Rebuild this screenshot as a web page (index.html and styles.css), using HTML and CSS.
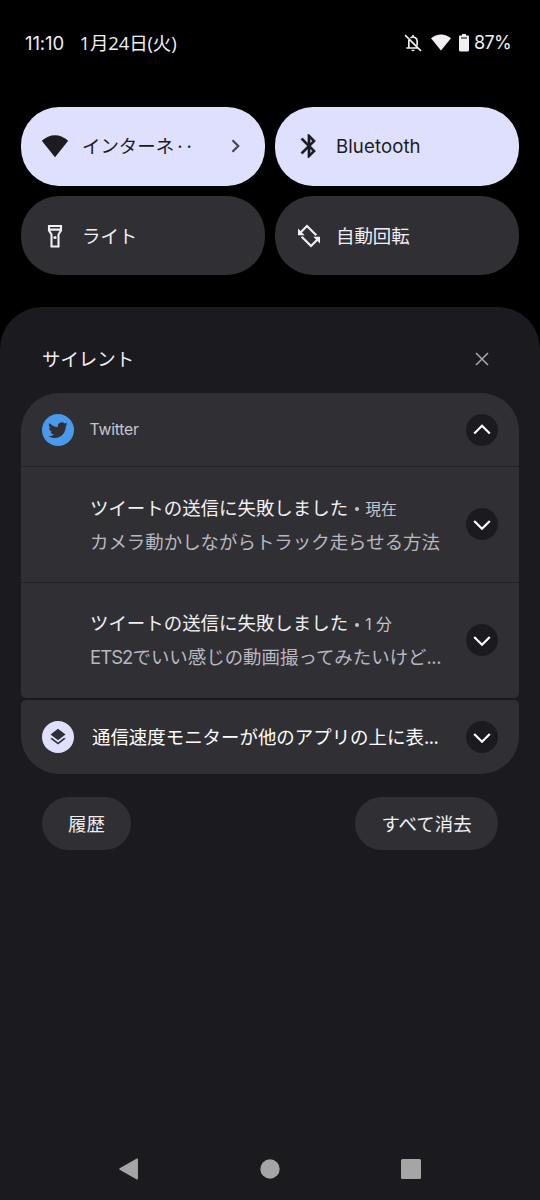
FILE: index.html
```html
<!DOCTYPE html>
<html lang="ja">
<head>
<meta charset="utf-8">
<title>通知</title>
<link rel="stylesheet" href="styles.css">
</head>
<body>
<div class="screen">
  <header class="status">
    <span class="clock">11:10</span>
    <span class="date">1月24日(火)</span>
    <div class="status-icons">
      <svg class="bell" viewBox="0 0 24 24" fill="none" stroke="currentColor" stroke-width="2"><path d="M2.500 2.500 21.500 21.500M7 8.500V18M4 18h14M9 5.900A5 5 0 0 1 17 10v5M12 2.500v2"/><path d="M10 20h4a2 2 0 0 1-4 0z" fill="currentColor" stroke="none"/></svg>
      <svg class="wifi-small" viewBox="0 0 20 17"><path d="M10 16.500 0 4.200C5.500-.9 14.500-.9 20 4.200z" fill="currentColor"/></svg>
      <svg class="battery" viewBox="0 0 10 18"><path fill="currentColor" fill-rule="evenodd" d="M3 0h4v1.500h2a1 1 0 0 1 1 1V16a1.500 1.500 0 0 1-1.500 1.500h-7A1.500 1.500 0 0 1 0 16V2.500a1 1 0 0 1 1-1h2zM2 3.400v1.200h6V3.400z"/></svg>
      <span class="percent">87%</span>
    </div>
  </header>

  <section class="tiles">
    <div class="tile on">
      <svg class="tile-icon" viewBox="0 0 28 28"><path d="M14 25.300.800 8.800C8.400 1.300 19.600 1.300 27.200 8.800z" fill="currentColor"/></svg>
      <span class="label">インターネ<span class="dots">··</span></span>
      <svg class="next" viewBox="0 0 10 14" fill="none" stroke="currentColor" stroke-width="2.200"><path d="m1.500 1.200 5.800 5.800-5.800 5.800"/></svg>
    </div>
    <div class="tile on">
      <svg class="tile-icon" viewBox="0 0 24 24"><path fill="currentColor" stroke="currentColor" stroke-width=".3" d="M17.710 7.710 12 2h-1v7.590L6.410 5 5 6.410 10.590 12 5 17.590 6.410 19 11 14.410V22h1l5.710-5.710L13.410 12zM13 5.830l1.880 1.880L13 9.590zm1.880 10.460L13 18.170v-3.760z"/></svg>
      <span class="label latin">Bluetooth</span>
    </div>
    <div class="tile">
      <svg class="tile-icon" viewBox="0 0 28 28" fill="none" stroke="currentColor" stroke-width="2.100"><path d="M8 4h12v4.500l-2.500 4V24.500h-7V12.500L8 8.500zM8 7.600h12"/><circle cx="14" cy="15.500" r="1.600" fill="currentColor" stroke="none"/></svg>
      <span class="label">ライト</span>
    </div>
    <div class="tile">
      <svg class="tile-icon" viewBox="0 0 28 28" fill="none" stroke="currentColor" stroke-width="2.200"><path d="M21.300 13.200 12 4 5 11M6.700 14.800l9.300 9.200 7-7"/><path d="M3 6.500v6.700h6.700zM25 21.500v-6.700h-6.700z" fill="currentColor" stroke="none"/></svg>
      <span class="label">自動回転</span>
    </div>
  </section>

  <main class="shade">
    <div class="section-head">
      <span>サイレント</span>
      <svg class="close" viewBox="0 0 14 14" fill="none" stroke="currentColor" stroke-width="1.500"><path d="m1 1 12 12M13 1 1 13"/></svg>
    </div>

    <article class="card group">
      <div class="group-head">
        <span class="app-icon twitter"><svg viewBox="0 0 24 24"><path fill="currentColor" d="M23.640 4.940c-.860.380-1.780.640-2.750.750a4.800 4.800 0 0 0 2.100-2.640 9.600 9.600 0 0 1-3.030 1.160 4.780 4.780 0 0 0-8.150 4.360A13.560 13.560 0 0 1 1.960 3.570a4.780 4.780 0 0 0 1.480 6.380 4.760 4.760 0 0 1-2.160-.600v.060a4.780 4.780 0 0 0 3.830 4.690 4.790 4.790 0 0 1-2.160.080 4.780 4.780 0 0 0 4.460 3.320A9.580 9.580 0 0 1 .340 19.480a13.520 13.520 0 0 0 7.320 2.150c8.800 0 13.600-7.290 13.600-13.600l-.020-.620a9.700 9.700 0 0 0 2.400-2.470z"/></svg></span>
        <span class="app-name">Twitter</span>
        <span class="expand"><svg viewBox="0 0 20 20"><path d="m2.200 13.500 7.800-7.800 7.800 7.800"/></svg></span>
      </div>
      <div class="message">
        <div class="copy">
          <div class="title">ツイートの送信に失敗しました<span class="time"><i class="dot"></i>現在</span></div>
          <div class="body">カメラ動かしながらトラック走らせる方法</div>
        </div>
        <span class="expand"><svg viewBox="0 0 20 20"><path d="m2.200 7 7.800 7.800L17.800 7"/></svg></span>
      </div>
      <div class="message">
        <div class="copy">
          <div class="title">ツイートの送信に失敗しました<span class="time"><i class="dot"></i>1 分</span></div>
          <div class="body"><span class="ets">ETS2</span>でいい感じの動画撮ってみたいけど<span class="ell">...</span></div>
        </div>
        <span class="expand"><svg viewBox="0 0 20 20"><path d="m2.200 7 7.800 7.800L17.800 7"/></svg></span>
      </div>
    </article>

    <article class="card single">
      <span class="app-icon layers"><svg viewBox="0 0 24 24"><path fill="currentColor" d="m11.990 18.540-7.370-5.730L3 14.070l9 7 9-7-1.630-1.270zM12 16l7.360-5.730L21 9l-9-7-9 7 1.630 1.270z"/></svg></span>
      <span class="single-title">通信速度モニターが他のアプリの上に表<span class="ell">...</span></span>
      <span class="expand"><svg viewBox="0 0 20 20"><path d="m2.200 7 7.800 7.800L17.800 7"/></svg></span>
    </article>

    <div class="actions">
      <button class="pill history">履歴</button>
      <button class="pill clear">すべて消去</button>
    </div>

    <nav class="nav">
      <svg viewBox="0 0 22 22"><path d="M2 11 19.200 1.200v19.600z" fill="currentColor" stroke="currentColor" stroke-width="1.500" stroke-linejoin="round"/></svg>
      <svg viewBox="0 0 22 22"><circle cx="11" cy="11" r="9.700" fill="currentColor"/></svg>
      <svg viewBox="0 0 22 22"><rect x="1" y="1" width="20" height="20" rx="1.500" fill="currentColor"/></svg>
    </nav>
  </main>
</div>
</body>
</html>
```
FILE: styles.css
```css
* { box-sizing: border-box; }
body {
  margin: 0;
  background: #000;
  color: #f1eff4;
  font-family: Inter, "Noto Sans CJK JP", sans-serif;
  font-size: 18.450px;
  line-height: 28px;
  white-space: nowrap;
}
svg { display: block; flex: none; }
.screen { width: 540px; height: 1200px; display: flex; flex-direction: column; overflow: hidden; }

.status { height: 106.500px; flex: none; padding: 28.500px 30px 0 25px; display: flex; align-items: flex-start; }
.clock { width: 54.500px; font-size: 18.500px; letter-spacing: -.1px; }
.date { font-size: 18.500px; letter-spacing: -.15px; font-family: "Open Sans", "Noto Sans CJK JP", sans-serif; }
.status-icons { margin-left: auto; display: flex; align-items: center; height: 28px; }
.bell { width: 20px; height: 20px; }
.wifi-small { width: 20px; height: 17px; margin-left: 8px; }
.battery { width: 10px; height: 18px; margin: 0 5px 0 8px; }
.percent { width: 36px; font-size: 18px; letter-spacing: -.7px; }

.tiles { flex: none; display: grid; grid-template-columns: 243.500px 243.500px; gap: 10.500px; padding: 0 21px; margin-bottom: 31.500px; }
.tile { height: 79px; border-radius: 38px; background: #303034; display: flex; align-items: center; padding: 0 24px 0 20px; }
.tile.on { background: #dfe0fe; color: #1b1b20; }
.tile-icon { width: 28px; height: 28px; margin-right: 13px; }
.label.latin { font-size: 18.600px; letter-spacing: .1px; }
.dots { letter-spacing: 4px; margin-left: 3px; }
.next { width: 10px; height: 14px; margin-left: auto; color: #45464f; }

.shade { flex: 1; background: #1b1b1f; border-radius: 42px 42px 0 0; padding: 0 21px; display: flex; flex-direction: column; }
.section-head { height: 86.500px; padding: 18px 30px 0 21px; display: flex; align-items: center; justify-content: space-between; }
.close { width: 14px; height: 14px; color: #a9a8b0; }

.card { background: #303034; width: 498px; }
.group { height: 304.500px; border-radius: 38px 38px 5px 5px; }
.group-head { height: 73px; display: flex; align-items: center; padding: 0 21px; }
.app-icon { width: 32px; height: 32px; border-radius: 50%; display: grid; place-items: center; flex: none; }
.twitter { background: #4a9aec; color: #303034; }
.twitter svg { width: 20px; height: 20px; }
.layers { background: #dfe0fe; color: #303034; }
.layers svg { width: 20px; height: 20px; }
.app-name { margin-left: 15.500px; color: #c6c4cc; font-size: 15.800px; letter-spacing: -.25px; }
.expand { width: 32px; height: 32px; border-radius: 50%; background: #1b1b1f; margin-left: auto; display: grid; place-items: center; flex: none; }
.expand svg { width: 20px; height: 20px; fill: none; stroke: #fff; stroke-width: 2.200; }
.message { height: 115.500px; border-top: 1px solid #232327; padding: 0 21px 0 69px; display: flex; align-items: center; }
.copy { line-height: 33px; padding-top: 1px; }
.title { display: flex; align-items: center; }
.time { color: #c6c4cc; font-size: 15.800px; display: flex; align-items: center; padding-top: 2px; }
.dot { width: 4px; height: 4px; border-radius: 50%; background: currentColor; margin: 0 6px 0 7px; }
.body { color: #b9b7c0; }
.ets { letter-spacing: -.9px; }
.ell { letter-spacing: -.5px; }

.single { height: 73.500px; margin-top: 2.500px; border-radius: 5px 5px 38px 38px; display: flex; align-items: center; padding: 0 21px; }
.single-title { margin-left: 18px; color: #fff; }

.actions { display: flex; justify-content: space-between; padding: 23.500px 21px 0; }
.pill { height: 53px; border: 0; border-radius: 27px; background: #303034; color: #f1eff4; font: inherit; padding: 0; }
.history { width: 89px; }
.clear { width: 143px; }
.nav { margin-top: auto; height: 63px; display: flex; justify-content: space-between; align-items: center; padding: 0 97.500px 0 96.500px; color: #a5a5a5; }
.nav svg { width: 22px; height: 22px; }
```
